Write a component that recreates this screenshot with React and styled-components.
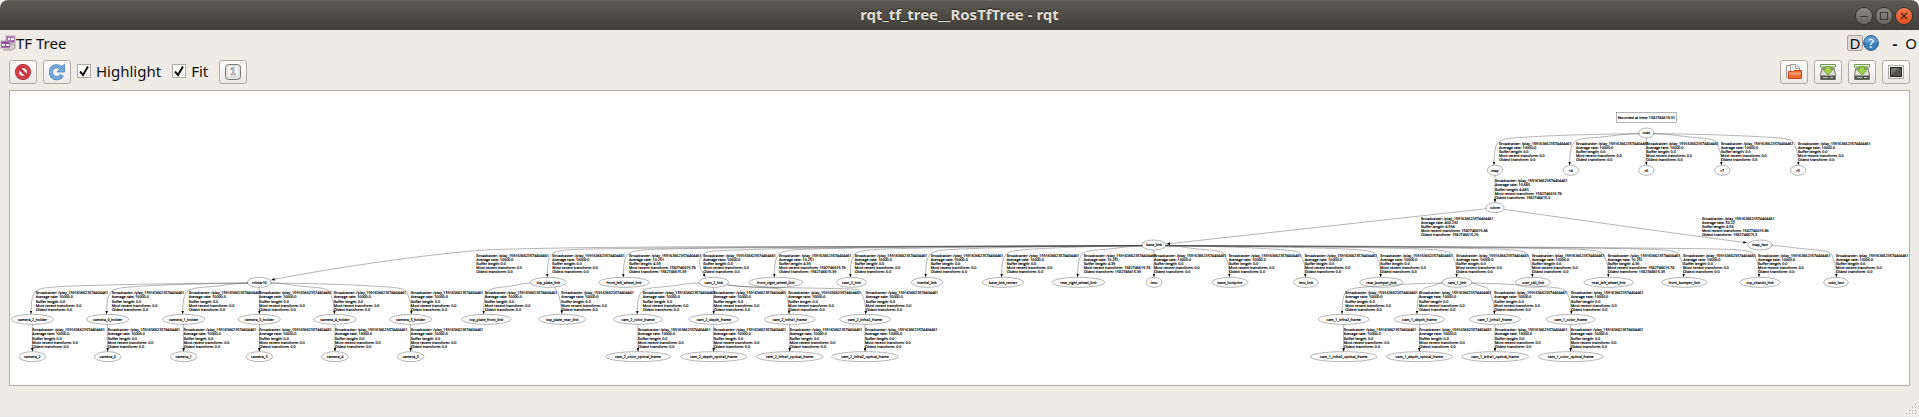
import React from "react";
import styled, { createGlobalStyle } from "styled-components";

const GlobalStyle = createGlobalStyle`
  * { box-sizing: border-box; }
  html, body { margin: 0; background: #fff; }
  body { font-family: "Noto Sans", "Open Sans", sans-serif; font-size: 15px; color: #111; }
`;

const Window = styled.div`
  display: flex;
  flex-direction: column;
  min-height: 100vh;
  background: #efebe7;
  border-radius: 8px 8px 0 0;
  overflow: hidden;
`;

const TitleBar = styled.header`
  display: grid;
  grid-template-columns: 1fr auto 1fr;
  align-items: center;
  height: 30px;
  padding: 0 7px;
  background: linear-gradient(#5b5950, #3f3e39);
  border-top: 1px solid #67645b;
`;

const Title = styled.h1`
  grid-column: 2;
  margin: 0;
  font-size: 15px;
  line-height: 20px;
  padding-bottom: 4px;
  font-weight: 700;
  color: #dfdbd2;
  text-shadow: 0 -1px 1px #2c2b27;
`;

const WindowControls = styled.div`
  display: flex;
  justify-content: flex-end;
  gap: 4px;
`;

const RoundButton = styled.button`
  display: grid;
  place-items: center;
  width: 16px;
  height: 16px;
  padding: 0;
  border: 0;
  border-radius: 50%;
  box-shadow: 0 0 0 1px #35342f;
  background: ${(p) => (p.$close ? "linear-gradient(#f5794f, #e0501f)" : "linear-gradient(#8b8a81, #66655e)")};
`;

const DockHeader = styled.div`
  display: flex;
  align-items: center;
  height: 26px;
`;

const DockTitle = styled.h2`
  margin: 0;
  flex: 1;
  font-size: 15px;
  line-height: 20px;
  font-weight: 400;
`;

const DockButton = styled.button`
  display: grid;
  place-items: center;
  height: 16px;
  min-width: 16px;
  padding: 0;
  border: ${(p) => (p.$raised ? "1px solid #a8a39f" : "0")};
  border-radius: 2px;
  background: ${(p) => (p.$raised ? "#dfdbd8" : "none")};
  font: inherit;
  font-weight: ${(p) => (p.$apart ? 700 : 400)};
  line-height: 14px;
  color: inherit;
  margin-left: ${(p) => (p.$apart ? "8px" : "0")};
`;

const Toolbar = styled.div`
  display: flex;
  align-items: center;
  gap: 6px;
  padding: 4px 9px 6px;
`;

const ToolButton = styled.button`
  display: grid;
  place-items: center;
  width: 28px;
  height: 24px;
  padding: 0;
  border: 1px solid #b0aaa6;
  border-radius: 3px;
  background: linear-gradient(#fdfdfc, #ece9e6);
`;

const Spacer = styled.div`
  flex: 1;
`;

const CheckLabel = styled.label`
  display: flex;
  align-items: center;
  gap: 5px;
  height: 24px;
  padding: 0 5px 2px 0;
  line-height: 20px;
`;

const CheckBox = styled.span`
  position: relative;
  width: 14px;
  height: 14px;
  svg { position: absolute; inset: 0; pointer-events: none; }
  input:not(:checked) + svg { display: none; }
`;

const CheckInput = styled.input`
  display: block;
  appearance: none;
  width: 14px;
  height: 14px;
  margin: 0;
  border: 1px solid #b0aaa6;
  background: #fff;
`;

const GraphView = styled.main`
  margin: 0 9px;
  border: 1px solid #b5afac;
  background: #fff;
`;

const Graph = styled.svg`
  display: block;
  width: 100%;
  height: auto;
  font-family: "Open Sans", "Noto Sans", sans-serif;
  font-size: 11px;
  text-rendering: geometricPrecision;
  text {
    fill: #000;
    stroke: #000;
    stroke-width: 0.5;
  }
`;

const Outline = styled.g`
  fill: none;
  stroke: #444;
  stroke-width: 1.2;
`;

const NodeName = styled.text`
  text-anchor: middle;
`;

const StatusArea = styled.footer`
  flex: 1;
  display: flex;
  align-items: flex-end;
  justify-content: flex-end;
  min-height: 30px;
  padding: 2px;
`;

/* ---------- transform tree ---------- */

const LEVELS = [399, 511, 623, 735, 847, 958, 1070];
const RY = 15;
const wheel = ["10.251", "4.39", "1582746619.78", "1582746615.39"];
const still = ["10000.0", "0.0", "0.0", "0.0"];

// name, level, x, half width, parent, label x, arrow x, statistics
const FRAMES = [
  ["subt", 0, 4939, 23],
  ["map", 1, 4485, 23, "subt", 4497, 4482],
  ["r4", 1, 4713, 23, "subt", 4728, 4709],
  ["r6", 1, 4939, 23, "subt"],
  ["r7", 1, 5167, 23, "subt", 5163, 5164],
  ["r5", 1, 5394, 23, "subt", 5394, 5395],
  ["odom", 2, 4485, 27, "map", 4485, 4485, ["10.685", "4.483", "1582746619.78", "1582746615.3"]],
  ["base_link", 3, 3462, 37, "odom", 4263, 3498, ["400.292", "4.594", "1582746619.88", "1582746615.29"]],
  ["map_fast", 3, 5280, 37, "odom", 5106, 5242, ["50.22", "4.56", "1582746619.86", "1582746615.3"]],
  ["rslidar16", 4, 778, 36, "base_link", 1429, 813],
  ["top_plate_link", 4, 1645, 54, "base_link", 1657, 1642],
  ["front_left_wheel_link", 4, 1872, 76, "base_link", 1887, 1870, wheel],
  ["cam_2_link", 4, 2141, 45, "base_link", 2110, 2118],
  ["front_right_wheel_link", 4, 2327, 81, "base_link", 2337, 2323, wheel],
  ["cam_3_link", 4, 2554, 45, "base_link", 2564, 2551],
  ["inertial_link", 4, 2781, 47, "base_link", 2792, 2777],
  ["base_link_center", 4, 3009, 62, "base_link", 3020, 3005],
  ["rear_right_wheel_link", 4, 3235, 79, "base_link", 3251, 3233, wheel],
  ["imu", 4, 3462, 24, "base_link"],
  ["base_footprint", 4, 3690, 54, "base_link", 3686, 3688],
  ["imu_link", 4, 3918, 37, "base_link", 3914, 3916],
  ["rear_bumper_link", 4, 4144, 65, "base_link", 4141, 4142],
  ["cam_1_link", 4, 4371, 45, "base_link", 4369, 4370],
  ["user_rail_link", 4, 4599, 53, "base_link", 4596, 4597],
  ["rear_left_wheel_link", 4, 4826, 74, "base_link", 4823, 4825, wheel],
  ["front_bumper_link", 4, 5053, 67, "base_link", 5050, 5051],
  ["top_chassis_link", 4, 5280, 61, "base_link", 5274, 5277],
  ["subt_fast", 4, 5508, 37, "map_fast", 5508, 5509],
  ["camera_2_holder", 5, 97, 63, "rslidar16", 107, 93],
  ["camera_0_holder", 5, 323, 63, "rslidar16", 335, 320],
  ["camera_1_holder", 5, 551, 63, "rslidar16", 566, 548],
  ["camera_3_holder", 5, 778, 63, "rslidar16"],
  ["camera_4_holder", 5, 1005, 63, "rslidar16", 1001, 1003],
  ["camera_5_holder", 5, 1232, 63, "rslidar16", 1232, 1234],
  ["top_plate_front_link", 5, 1459, 74, "top_plate_link", 1454, 1451],
  ["top_plate_rear_link", 5, 1687, 70, "top_plate_link", 1684, 1686],
  ["cam_2_color_frame", 5, 1914, 73, "cam_2_link", 1928, 1912],
  ["cam_2_depth_frame", 5, 2141, 74, "cam_2_link"],
  ["cam_2_infra1_frame", 5, 2369, 76, "cam_2_link", 2365, 2367],
  ["cam_2_infra2_frame", 5, 2595, 76, "cam_2_link", 2597, 2597],
  ["cam_1_infra2_frame", 5, 4031, 76, "cam_1_link", 4036, 4026],
  ["cam_1_depth_frame", 5, 4258, 75, "cam_1_link", 4257, 4251],
  ["cam_1_infra1_frame", 5, 4485, 76, "cam_1_link", 4483, 4483],
  ["cam_1_color_frame", 5, 4712, 73, "cam_1_link", 4713, 4714],
  ["camera_2", 6, 97, 40, "camera_2_holder"],
  ["camera_0", 6, 323, 40, "camera_0_holder"],
  ["camera_1", 6, 551, 40, "camera_1_holder"],
  ["camera_3", 6, 778, 40, "camera_3_holder"],
  ["camera_4", 6, 1005, 40, "camera_4_holder"],
  ["camera_5", 6, 1232, 40, "camera_5_holder"],
  ["cam_2_color_optical_frame", 6, 1914, 97, "cam_2_color_frame"],
  ["cam_2_depth_optical_frame", 6, 2141, 99, "cam_2_depth_frame"],
  ["cam_2_infra1_optical_frame", 6, 2369, 100, "cam_2_infra1_frame"],
  ["cam_2_infra2_optical_frame", 6, 2595, 100, "cam_2_infra2_frame"],
  ["cam_1_infra2_optical_frame", 6, 4031, 100, "cam_1_infra2_frame"],
  ["cam_1_depth_optical_frame", 6, 4258, 99, "cam_1_depth_frame"],
  ["cam_1_infra1_optical_frame", 6, 4485, 100, "cam_1_infra1_frame"],
  ["cam_1_color_optical_frame", 6, 4712, 97, "cam_1_color_frame"],
].map(([name, level, x, rx, parent, labelX = x, tipX = x, stats = still]) => ({
  name, level, x, rx, parent, labelX, tipX, stats, y: LEVELS[level],
}));

const BY_NAME = Object.fromEntries(FRAMES.map((f) => [f.name, f]));

// Edges whose route is not the usual shoulder-and-drop.
const ROUTES = {
  base_link: "M4459 626L3509 731",
  map_fast: "M4512 628C4700 655 5060 705 5231 727",
  rslidar16: "M3425 737C2700 742 1900 735 1470 749C1300 760 1020 800 823 838",
  cam_2_link: "M3425 737C2900 738 2300 742 2130 754C2098 760 2088 790 2111 823",
  top_plate_rear_link: "M1663 862C1676 878 1682 900 1685 932",
  cam_2_infra1_frame: "M2182 854C2230 862 2290 862 2335 866C2360 870 2366 900 2367 933",
  cam_2_infra2_frame: "M2182 855C2240 865 2400 861 2568 868C2588 872 2596 905 2597 933",
};

function route(frame, parent) {
  if (ROUTES[frame.name]) return ROUTES[frame.name];
  const end = frame.y - RY - 10;
  if (frame.x === parent.x) return `M${parent.x} ${parent.y + RY}V${end}`;
  const dir = frame.x < parent.x ? -1 : 1;
  const t = frame.tipX;
  const startX = parent.x + dir * (parent.rx - 2);
  const y = parent.y;
  const span = Math.abs(startX - t);
  const edge = Math.min(70, span * 0.4);
  const shoulder = t - dir * edge;
  const mid = startX + dir * (span - edge) * 0.5;
  return `M${startX} ${y + 2}C${mid} ${y + 4} ${shoulder - dir * edge} ${y + 9} ${shoulder} ${y + 14}` +
    `C${t - dir * 18} ${y + 18} ${t - dir * 14} ${y + 23} ${t - dir * (dir < 0 ? 5 : 9)} ${y + 42}Q${t} ${y + 58} ${t} ${end}`;
}

function EdgeStats({ x, y, stats }) {
  const [rate, buffer, recent, oldest] = stats;
  const lines = [
    "Broadcaster: /play_1591636623574404461",
    `Average rate: ${rate}`,
    `Buffer length: ${buffer}`,
    `Most recent transform: ${recent}`,
    `Oldest transform: ${oldest}`,
  ];
  return (
    <text>
      {lines.map((line, i) => (
        <tspan key={i} x={x} y={y + 36 + Math.round(i * 12.3)}>{line}</tspan>
      ))}
    </text>
  );
}

function TransformTree() {
  return (
    <Graph viewBox="30 273 5697 882" role="img" aria-label="Transform tree">
      <defs>
        <marker id="head" viewBox="0 0 11 8" markerWidth="11" markerHeight="8" refX="1" refY="4" orient="auto" markerUnits="userSpaceOnUse">
          <path d="M0 0L11 4L0 8Z" fill="#000" />
        </marker>
      </defs>
      <Outline>
        <rect x="4850" y="337" width="179" height="31" />
        {FRAMES.map((f) => (
          <ellipse key={f.name} cx={f.x} cy={f.y} rx={f.rx} ry={RY} />
        ))}
        {FRAMES.filter((f) => f.parent).map((f) => (
          <path key={f.name} d={route(f, BY_NAME[f.parent])} markerEnd="url(#head)" />
        ))}
      </Outline>
      <NodeName x="4939" y="356">Recorded at time: 1582746619.91</NodeName>
      {FRAMES.map((f) => (
        <React.Fragment key={f.name}>
          <NodeName x={f.x} y={f.y + 4}>{f.name}</NodeName>
          {f.parent && <EdgeStats x={f.labelX} y={BY_NAME[f.parent].y} stats={f.stats} />}
        </React.Fragment>
      ))}
    </Graph>
  );
}

/* ---------- icons ---------- */

const Icon = ({ size = 18, children }) => (
  <svg width={size} height={size} viewBox={`0 0 ${size} ${size}`} aria-hidden="true">{children}</svg>
);

const PluginIcon = () => (
  <Icon size={16}>
    <path d="M3 15h9l3-2V9l-3 1-2-3" fill="#d4d1cd" stroke="#a19d98" />
    <rect x="6" y="1" width="9" height="7" fill="#a765ac" stroke="#b9a5bb" />
    <path d="M8 3h2v2H8zM11 3h3v2h-3z" fill="#fff" />
    <rect x="1" y="6" width="9" height="7" fill="#8d4b93" stroke="#b9a5bb" />
    <path d="M2 9h3v2H2zM6 9h3v2H6z" fill="#f4edf5" />
  </Icon>
);

const StopIcon = () => (
  <Icon>
    <circle cx="9" cy="9" r="6" fill="#f6eeee" stroke="#a82028" strokeWidth="4" />
    <circle cx="9" cy="9" r="6" fill="none" stroke="#d6414a" strokeWidth="2.6" />
    <path d="M5 5L13 13" stroke="#c4303a" strokeWidth="2.8" />
  </Icon>
);

const RefreshIcon = () => (
  <Icon>
    <path d="M14 12A6 6 0 1 1 12.5 4.5" fill="none" stroke="#4480bb" strokeWidth="4" />
    <path d="M16.5 1.5V9H9L12 6L10.5 4.5L13.5 3.5Z" fill="#78abdc" stroke="#4480bb" strokeWidth=".8" />
    <path d="M14 12A6 6 0 1 1 12.5 4.5" fill="none" stroke="#78abdc" strokeWidth="2.6" />
  </Icon>
);

const OneIcon = () => (
  <Icon>
    <rect x="1.5" y="1.5" width="15" height="15" rx="3" fill="#e4e4e2" stroke="#777" />
    <rect x="3.5" y="2.5" width="11" height="11" rx="2" fill="#f8f8f7" stroke="#dededc" />
    <text x="9" y="12" textAnchor="middle" fontSize="10" fontWeight="700" fill="#fff" stroke="#8a8a88" strokeWidth=".7">1</text>
  </Icon>
);

const FolderIcon = () => (
  <Icon>
    <path d="M1.5 15.5V2.5H6.5L8.5 4.5V8" fill="#f5f5f3" stroke="#989690" />
    <path d="M5.5 9V1.5H11L14.5 5V9Z" fill="#fff" stroke="#989690" />
    <path d="M10.5 1.5V5.5H14.5" fill="none" stroke="#b5b3ae" />
    <path d="M3.5 15.5V8.5H8L9 7.5H16.5V15.5Z" fill="#ea6a38" stroke="#c5441b" />
    <path d="M4 9.5H16V11.5H4Z" fill="#f6a077" />
  </Icon>
);

const SaveIcon = () => (
  <Icon>
    <path d="M3 5L1.5 12V16.5H16.5V12L15 5Z" fill="#deded9" stroke="#77776f" />
    <rect x="2" y="12.5" width="14" height="4" fill="#55564f" />
    <path d="M4 14.5H9M11 14.5H14" stroke="#bbb" />
    <path d="M1.5 1.5H16.5V4H1.5Z" fill="#f5faef" stroke="#6b9a4c" />
    <path d="M6.5 3.5H11.5V6H14.5L9 12L3.5 6H6.5Z" fill="#a5d14a" stroke="#649135" strokeWidth=".8" />
  </Icon>
);

const ScreenIcon = () => (
  <Icon>
    <rect x="1.5" y="2.5" width="15" height="13" fill="#f8f8f7" stroke="#a9a8a4" />
    <rect x="3.5" y="4.5" width="11" height="9" fill="#515250" stroke="#222" />
    <path d="M4 5H12L4 12Z" fill="#747573" />
  </Icon>
);

const HelpIcon = () => (
  <Icon size={16}>
    <circle cx="8" cy="8" r="7.4" fill="#3f7fb9" stroke="#285e94" />
    <path d="M1.5 7A6.6 6.6 0 0 1 14.5 7Q8 9 1.5 7Z" fill="#659bcb" />
    <text x="8" y="12.5" textAnchor="middle" fontSize="13" fill="#fff">?</text>
  </Icon>
);

function Check({ children }) {
  return (
    <CheckLabel>
      <CheckBox>
        <CheckInput type="checkbox" defaultChecked />
        <svg width="14" height="14" viewBox="0 0 14 14" aria-hidden="true">
          <path d="M3 7.5L6 11L11 2.5" fill="none" stroke="#111" strokeWidth="2" />
        </svg>
      </CheckBox>
      {children}
    </CheckLabel>
  );
}

export default function App() {
  return (
    <>
      <GlobalStyle />
      <Window>
        <TitleBar>
          <Title>rqt_tf_tree__RosTfTree - rqt</Title>
          <WindowControls>
            <RoundButton aria-label="Minimize">
              <Icon size={16}><path d="M4 8.5H12" stroke="#3b3a35" /></Icon>
            </RoundButton>
            <RoundButton aria-label="Maximize">
              <Icon size={16}><rect x="4.5" y="4.5" width="7" height="7" fill="none" stroke="#3b3a35" /></Icon>
            </RoundButton>
            <RoundButton $close aria-label="Close">
              <Icon size={16}><path d="M5 5L11 11M11 5L5 11" stroke="#51210f" strokeWidth="1.3" /></Icon>
            </RoundButton>
          </WindowControls>
        </TitleBar>
        <DockHeader>
          <PluginIcon />
          <DockTitle>TF Tree</DockTitle>
          <DockButton $raised>D</DockButton>
          <DockButton aria-label="Help"><HelpIcon /></DockButton>
          <DockButton $apart>-</DockButton>
          <DockButton>O</DockButton>
        </DockHeader>
        <Toolbar>
          <ToolButton aria-label="Clear"><StopIcon /></ToolButton>
          <ToolButton aria-label="Refresh"><RefreshIcon /></ToolButton>
          <Check>Highlight</Check>
          <Check>Fit</Check>
          <ToolButton aria-label="Fit in view"><OneIcon /></ToolButton>
          <Spacer />
          <ToolButton aria-label="Load"><FolderIcon /></ToolButton>
          <ToolButton aria-label="Save as DOT"><SaveIcon /></ToolButton>
          <ToolButton aria-label="Save as SVG"><SaveIcon /></ToolButton>
          <ToolButton aria-label="Save as image"><ScreenIcon /></ToolButton>
        </Toolbar>
        <GraphView>
          <TransformTree />
        </GraphView>
        <StatusArea>
          <svg width="12" height="12" viewBox="0 0 12 12" aria-hidden="true">
            <path
              d="M10 1h1v1h-1zM7 4h1v1H7zM10 4h1v1h-1zM4 7h1v1H4zM7 7h1v1H7zM10 7h1v1h-1zM1 10h1v1H1zM4 10h1v1H4zM7 10h1v1H7zM10 10h1v1h-1z"
              fill="#aaa5a1"
            />
          </svg>
        </StatusArea>
      </Window>
    </>
  );
}
